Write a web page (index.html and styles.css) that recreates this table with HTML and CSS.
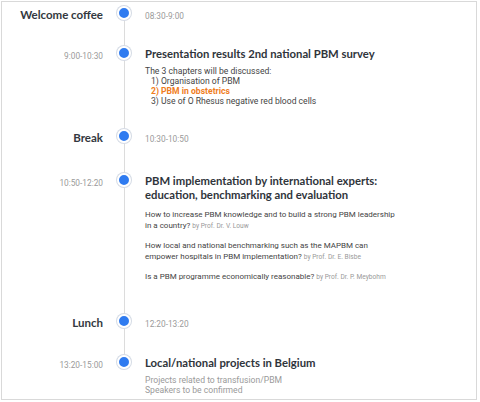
FILE: index.html
```html
<!DOCTYPE html>
<html>
<head>
<meta charset="utf-8">
<link rel="stylesheet" href="styles.css">
</head>
<body>
<div class="frame">
  <div class="timeline">
    <div class="row first r1">
      <div class="left"><span class="label">Welcome coffee</span></div>
      <div class="axis"><span class="dot"></span></div>
      <div class="content"><span class="time">08:30-9:00</span></div>
    </div>
    <div class="row r2">
      <div class="left"><span class="time">9:00-10:30</span></div>
      <div class="axis"><span class="dot"></span></div>
      <div class="content">
        <h3 class="title">Presentation results 2nd national PBM survey</h3>
        <div class="list">
          <div>The 3 chapters will be discussed:</div>
          <div class="item">1) Organisation of PBM</div>
          <div class="item hl">2) PBM in obstetrics</div>
          <div class="item">3) Use of O Rhesus negative red blood cells</div>
        </div>
      </div>
    </div>
    <div class="row r3">
      <div class="left"><span class="label">Break</span></div>
      <div class="axis"><span class="dot"></span></div>
      <div class="content"><span class="time">10:30-10:50</span></div>
    </div>
    <div class="row r4">
      <div class="left"><span class="time">10:50-12:20</span></div>
      <div class="axis"><span class="dot"></span></div>
      <div class="content">
        <h3 class="title two">PBM implementation by international experts:<br>education, benchmarking and evaluation</h3>
        <p class="q">How to increase PBM knowledge and to build a strong PBM leadership<br>in a country? <span class="by">by Prof. Dr. V. Louw</span></p>
        <p class="q">How local and national benchmarking such as the MAPBM can<br>empower hospitals in PBM implementation? <span class="by">by Prof. Dr. E. Bisbe</span></p>
        <p class="q">Is a PBM programme economically reasonable? <span class="by">by Prof. Dr. P. Meybohm</span></p>
      </div>
    </div>
    <div class="row r5">
      <div class="left"><span class="label">Lunch</span></div>
      <div class="axis"><span class="dot"></span></div>
      <div class="content"><span class="time">12:20-13:20</span></div>
    </div>
    <div class="row last r6">
      <div class="left"><span class="time">13:20-15:00</span></div>
      <div class="axis"><span class="dot"></span></div>
      <div class="content">
        <h3 class="title">Local/national projects in Belgium</h3>
        <div class="note">Projects related to transfusion/PBM<br>Speakers to be confirmed</div>
      </div>
    </div>
  </div>
</div>
</body>
</html>
```
FILE: styles.css
```css
html, body {
  margin: 0;
  padding: 0;
  background: #fff;
}
body {
  font-family: Roboto, "Liberation Sans", sans-serif;
}
.frame {
  margin: 1px 0 0 1px;
  width: 476px;
  height: 399px;
  box-sizing: border-box;
  border: 1px solid #d9d9d9;
  overflow: hidden;
}
.timeline {
  padding-top: 2px;
}
.row {
  display: grid;
  grid-template-columns: 101px 42px 1fr;
}
.r1 .content { padding-bottom: 18px; }
.r2 .content { padding-bottom: 21px; }
.r3 .content { padding-bottom: 22px; }
.r4 .content { padding-bottom: 29px; }
.r5 .content { padding-bottom: 19px; }

.left {
  text-align: right;
  line-height: 20px;
}
.label {
  font-family: Lato, "Noto Sans", sans-serif;
  font-weight: 700;
  font-size: 11.5px;
  color: #333840;
}
.time {
  font-size: 8.3px;
  color: #9a9a9a;
  line-height: 20px;
}
.axis {
  display: flex;
  justify-content: center;
  align-items: flex-start;
  background: linear-gradient(#dcdcdc, #dcdcdc) no-repeat center top / 1px 100%;
}
.first .axis {
  background-position: center bottom;
  background-size: 1px calc(100% - 11px);
}
.last .axis {
  background-size: 1px 11px;
}
.dot {
  margin-top: 2px;
  width: 10px;
  height: 10px;
  border-radius: 50%;
  background: #2f7bf0;
  border: 2px solid #fff;
  box-shadow: 0 0 0 1px #d5dbe5;
}
.content {
  padding-left: 0;
}
.title {
  margin: 0;
  padding-top: 3px;
  font-family: Lato, "Noto Sans", sans-serif;
  font-weight: 700;
  font-size: 11.3px;
  line-height: 14px;
  color: #2f343b;
}
.list {
  margin-top: 5px;
  font-size: 8.6px;
  line-height: 10px;
  color: #444;
}
.item { padding-left: 6px; }
.hl { color: #ef7d22; font-weight: 700; }
.q {
  margin: 7px 0 0 0;
  font-size: 8px;
  line-height: 11px;
  color: #444;
}
.q + .q { margin-top: 8px; }
.by {
  font-size: 6.6px;
  color: #999;
}
.note {
  margin-top: 5px;
  font-size: 8.6px;
  line-height: 10px;
  color: #9a9a9a;
}
```
